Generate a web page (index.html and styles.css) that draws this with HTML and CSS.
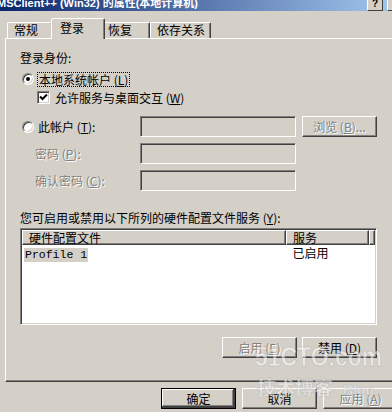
FILE: index.html
```html
<!DOCTYPE html>
<html lang="zh-CN">
<head>
    <meta charset="UTF-8">
    <title>MSClient++ (Win32) 的属性(本地计算机)</title>
    <link rel="stylesheet" href="styles.css">
</head>
<body>
    <div class="window">
        <div class="titlebar">
            <span class="title">MSClient++ (Win32) 的属性(本地计算机)</span>
            <span class="tb-btns">
                <span class="tb-btn">?</span>
                <span class="tb-btn">×</span>
            </span>
        </div>

        <div class="tabs">
            <div class="tab">常规</div>
            <div class="tab active">登录</div>
            <div class="tab">恢复</div>
            <div class="tab">依存关系</div>
        </div>

        <div class="panel">
            <div class="label">登录身份:</div>

            <div class="opt">
                <span class="radio checked"></span>
                <span class="focus">本地系统帐户 (<u>L</u>)</span>
            </div>
            <div class="opt sub">
                <span class="checkbox">
                    <svg width="9" height="9" viewBox="0 0 9 9"><path d="M1 3.5 L3.5 6 L8 1.5" fill="none" stroke="#000" stroke-width="2"/></svg>
                </span>
                <span>允许服务与桌面交互 (<u>W</u>)</span>
            </div>

            <div class="account">
                <div class="opt">
                    <span class="radio"></span>
                    <span>此帐户 (<u>T</u>):</span>
                </div>
                <div class="field"></div>
                <button class="btn disabled">浏览 (<u>B</u>)...</button>

                <div class="indent disabled">密码 (<u>P</u>):</div>
                <div class="field"></div>
                <div></div>

                <div class="indent disabled">确认密码 (<u>C</u>):</div>
                <div class="field"></div>
                <div></div>
            </div>

            <div class="label hw">您可启用或禁用以下所列的硬件配置文件服务 (<u>Y</u>):</div>

            <div class="list">
                <div class="list-head">
                    <div class="col c1">硬件配置文件</div>
                    <div class="col c2">服务</div>
                    <div class="col c3"></div>
                </div>
                <div class="list-row">
                    <div class="cell c1"><span class="sel">Profile 1</span></div>
                    <div class="cell c2">已启用</div>
                </div>
            </div>

            <div class="list-btns">
                <button class="btn disabled">启用 (<u>E</u>)</button>
                <button class="btn">禁用 (<u>D</u>)</button>
            </div>
        </div>

        <div class="footer">
            <button class="btn default">确定</button>
            <button class="btn">取消</button>
            <button class="btn disabled">应用 (<u>A</u>)</button>
        </div>

        <div class="watermark">
            <div class="wm-big">51CTO.com</div>
            <div class="wm-small"><span>技术博客</span><span class="wm-blog">Blog</span></div>
        </div>
    </div>
</body>
</html>
```

FILE: styles.css
```css
body {
    margin: 0;
    background-color: #d4d0c8;
    overflow: hidden;
    font-family: "Noto Sans CJK SC", "Liberation Sans", sans-serif;
    font-size: 12px;
    color: black;
}

u {
    text-decoration: underline;
}

.window {
    position: relative;
    width: 402px;
    height: 412px;
}

/* заголовок окна */
.titlebar {
    display: flex;
    align-items: flex-start;
    justify-content: space-between;
    height: 11px;
    overflow: hidden;
    background: linear-gradient(to right, #0a246a, #a6caf0);
}

.title {
    margin-left: -3px;
    margin-top: -4px;
    color: white;
    font-weight: bold;
    font-size: 11px;
    line-height: 14px;
    white-space: nowrap;
    font-family: "Liberation Sans", "Noto Sans CJK SC", sans-serif;
}

.tb-btns {
    display: flex;
    gap: 4px;
    margin-top: -4px;
    margin-right: -1px;
}

.tb-btn {
    width: 14px;
    height: 13px;
    background-color: #d4d0c8;
    border: 1px solid;
    border-color: #fff #404040 #404040 #fff;
    font: bold 10px/13px "Liberation Sans", sans-serif;
    text-align: center;
}

/* вкладки */
.tabs {
    display: flex;
    align-items: flex-end;
    height: 27px;
    padding-left: 7px;
}

.tab {
    position: relative;
    box-sizing: border-box;
    height: 16px;
    padding-left: 6px;
    line-height: 14px;
    border: 1px solid;
    border-bottom: none;
    border-color: #fff #404040 transparent #fff;
    box-shadow: inset -1px 0 #808080;
    border-radius: 2px 2px 0 0;
}

.tab:nth-child(1) { width: 46px; }
.tab:nth-child(3) { width: 47px; padding-left: 4px; }
.tab:nth-child(4) { width: 61px; }

.tab.active {
    z-index: 2;
    width: 54px;
    height: 21px;
    margin: 0 -2px -1px -2px;
    padding: 2px 0 0 8px;
    line-height: 14px;
    background-color: #d4d0c8;
}

.panel {
    margin-left: 5px;
    width: 402px;
    height: 344px;
    padding: 12px 0 0 14px;
    box-sizing: border-box;
    border: 1px solid;
    border-color: #fff #404040 #404040 #fff;
    box-shadow: inset -1px -1px #808080;
}

.label {
    line-height: 14px;
    height: 14px;
}

.opt {
    display: flex;
    align-items: center;
    height: 14px;
    margin-top: 7px;
}

.opt.sub {
    margin-top: 4px;
    margin-left: 17px;
}

.radio {
    position: relative;
    width: 10px;
    height: 10px;
    margin: 0 4px 0 2px;
    border-radius: 50%;
    background-color: white;
    border: 1px solid;
    border-color: #808080 #fff #fff #808080;
    box-shadow: inset 1px 1px #404040, inset -1px -1px #d4d0c8;
}

.radio.checked::after {
    content: "";
    position: absolute;
    left: 3px;
    top: 3px;
    width: 4px;
    height: 4px;
    border-radius: 50%;
    background-color: black;
}

.focus {
    outline: 1px dotted black;
    padding: 0 1px;
    line-height: 13px;
}

.checkbox {
    display: flex;
    align-items: center;
    justify-content: center;
    width: 11px;
    height: 11px;
    margin-right: 5px;
    background-color: white;
    border: 1px solid;
    border-color: #808080 #fff #fff #808080;
    box-shadow: inset 1px 1px #404040, inset -1px -1px #d4d0c8;
}

.account {
    display: grid;
    grid-template-columns: 114px 156px 75px;
    grid-auto-rows: 21px;
    column-gap: 6px;
    row-gap: 6px;
    margin-top: 12px;
    align-items: center;
}

.account .opt {
    margin-top: 0;
}

.indent {
    padding-left: 15px;
}

.field {
    height: 21px;
    box-sizing: border-box;
    border: 1px solid;
    border-color: #808080 #fff #fff #808080;
    box-shadow: inset 1px 1px #404040, inset -1px -1px #d4d0c8;
    background-color: #d4d0c8;
}

.disabled {
    color: #808080;
    text-shadow: 1px 1px 0 #fff;
}

.btn {
    width: 75px;
    height: 21px;
    padding: 0;
    background-color: #d4d0c8;
    border: 1px solid;
    border-color: #fff #404040 #404040 #fff;
    box-shadow: inset -1px -1px #808080;
    font-family: "Noto Sans CJK SC", "Liberation Sans", sans-serif;
    font-size: 12px;
    line-height: 17px;
    color: black;
}

.btn.disabled {
    color: #808080;
}

.btn.default {
    border-color: black;
    box-shadow: inset -2px -2px #404040, inset 1px 1px #fff, inset -3px -3px #808080;
}

.hw {
    margin-top: 20px;
}

/* список */
.list {
    width: 357px;
    height: 97px;
    margin-top: 3px;
    box-sizing: border-box;
    background-color: white;
    border: 1px solid;
    border-color: #808080 #fff #fff #808080;
    box-shadow: inset 1px 1px #404040, inset -1px -1px #d4d0c8;
    padding: 1px;
}

.list-head {
    display: flex;
    height: 15px;
}

.col {
    box-sizing: border-box;
    height: 15px;
    padding-left: 6px;
    line-height: 13px;
    background-color: #d4d0c8;
    border: 1px solid;
    border-color: #fff #404040 #404040 #fff;
    box-shadow: inset -1px -1px #808080;
}

.c1 { width: 264px; }
.c2 { width: 83px; }
.c3 { width: 6px; padding: 0; }

.list-row {
    display: flex;
    height: 14px;
    margin-top: 1px;
    line-height: 14px;
}

.cell.c1 {
    padding-left: 2px;
}

.cell.c2 {
    padding-left: 6px;
}

.sel {
    display: inline-block;
    width: 63px;
    padding-left: 1px;
    background-color: #d4d0c8;
    font-family: "Liberation Mono", monospace;
    font-size: 11.5px;
}

.list-btns {
    display: flex;
    gap: 5px;
    width: 357px;
    justify-content: flex-end;
    margin-top: 12px;
}

.footer {
    display: flex;
    justify-content: flex-end;
    gap: 6px;
    padding-right: 4px;
    margin-top: 6px;
}

/* водяной знак */
.watermark {
    position: absolute;
    left: 244px;
    top: 342px;
    color: rgba(255, 255, 255, 0.5);
    -webkit-text-stroke: 1px rgba(150, 150, 150, 0.3);
    pointer-events: none;
}

.wm-big {
    font-family: "Liberation Sans", sans-serif;
    font-weight: bold;
    font-size: 28px;
    line-height: 30px;
    transform: scaleX(0.82);
    transform-origin: left;
    margin-left: 11px;
}

.wm-small {
    display: flex;
    align-items: baseline;
    gap: 10px;
    margin-left: 13px;
    margin-top: 4px;
    font-size: 19px;
    font-weight: bold;
    line-height: 22px;
}

.wm-blog {
    font-family: "Liberation Sans", sans-serif;
    font-size: 14px;
}
```
